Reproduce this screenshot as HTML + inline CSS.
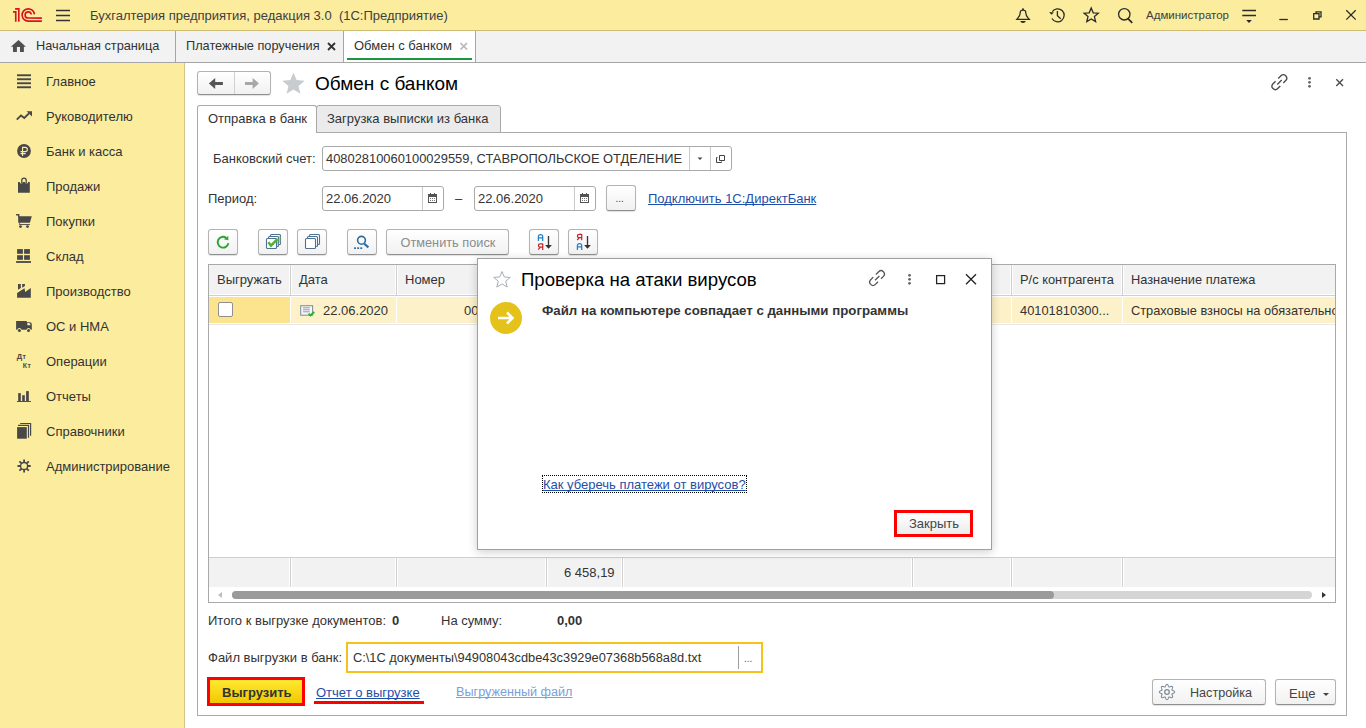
<!DOCTYPE html>
<html><head><meta charset="utf-8">
<style>
*{margin:0;padding:0;box-sizing:border-box}
html,body{width:1366px;height:728px;overflow:hidden;background:#fff;font-family:"Liberation Sans",sans-serif;font-size:13px;color:#333}
.a{position:absolute}
.t{position:absolute;white-space:pre;line-height:15px;font-size:13px}
svg{position:absolute;overflow:visible}
#topbar{left:0;top:0;width:1366px;height:31px;background:#fbec9e;border-bottom:1px solid #cdbd76}
#tabbar{left:0;top:31px;width:1366px;height:32px;background:#f2f2f2;border-bottom:1px solid #a5a5a5}
#side{left:0;top:63px;width:185px;height:665px;background:#fbec9e;border-right:1px solid #d3c68a}
.btn{position:absolute;border:1px solid #b3b3b3;border-bottom-color:#8f8f8f;border-radius:3px;background:linear-gradient(#fff,#f1f1f1);box-shadow:0 1px 1px rgba(0,0,0,.12)}
.inp{position:absolute;border:1px solid #a9a9a9;border-radius:3px;background:#fff}
.lnk{color:#1f4ea8;text-decoration:underline;text-decoration-skip-ink:none}
</style></head><body>

<!-- TOP BAR -->
<div id="topbar" class="a"></div>
<svg style="left:0;top:0" width="80" height="30" viewBox="0 0 80 30">
  <g fill="none" stroke="#d8131e" stroke-width="1.65">
    <path d="M13 11.9 H15.75 V21.8"/>
    <path d="M15.1 8.85 H18.8 V21.8"/>
    <path d="M34.4 14.3 A6.17 6.17 0 1 0 28.27 21.15 H41.9"/>
    <path d="M31.28 14.5 A3.1 3.1 0 1 0 28.2 18.05 H41.9"/>
  </g>
  <g stroke="#333" stroke-width="1.3">
    <path d="M56 10.5 H70 M56 15.5 H70 M56 20.5 H70"/>
  </g>
</svg>
<div class="t" style="left:90px;top:8px;color:#404040">Бухгалтерия предприятия, редакция 3.0  (1С:Предприятие)</div>

<!-- top right icons -->
<svg style="left:1000px;top:0" width="366" height="30" viewBox="1000 0 366 30">
  <g fill="none" stroke="#2b2b2b" stroke-width="1.3">
    <!-- bell -->
    <path d="M1016.8 19.4 H1029.3 L1028 17.9 C1026.5 16.4 1025.9 15 1025.7 12.5 L1025.6 11.3 Q1025.2 10.2 1023 10.2 Q1020.8 10.2 1020.4 11.3 L1020.3 12.5 C1020.1 15 1019.5 16.4 1018 17.9 Z"/>
    <!-- history -->
    <path d="M1052.3 11.6 A6.5 6.5 0 1 1 1052 18.5"/>
    <path d="M1057.4 11 V15.8 L1060.7 18.8"/>
    <!-- star -->
    <path d="M1091.2 8 L1093.2 12.8 L1098.3 13.2 L1094.4 16.6 L1095.6 21.6 L1091.2 18.9 L1086.8 21.6 L1088 16.6 L1084.1 13.2 L1089.2 12.8 Z"/>
    <!-- search -->
    <circle cx="1124.3" cy="14.3" r="5.7"/>
    <!-- filter -->
    <path d="M1242.3 10.5 H1256 M1242.3 15.5 H1256"/>
    <!-- minimize -->
    <path d="M1279.3 19.5 H1287.8"/>
    <!-- restore -->
    <path d="M1313.7 13.6 H1319 V19 H1313.7 Z M1316 13.6 V11.8 H1321 V16.8 H1319"/>
    <!-- close -->
    <path d="M1346.3 10.2 L1355.7 19.6 M1355.7 10.2 L1346.3 19.6"/>
  </g>
  <g fill="#2b2b2b">
    <circle cx="1023" cy="9.2" r="1"/>
    <path d="M1020.2 21 H1025.8 Q1025.2 22.9 1023 22.9 Q1020.8 22.9 1020.2 21 Z"/>
    <path d="M1049.1 12.1 L1053.9 12.6 L1051.5 14.8 Z"/>
    <path d="M1128.3 17.7 L1132.9 22.2 L1131.6 23.4 L1127.1 18.9 Z"/>
    <path d="M1246.2 20 H1251.8 L1249 22.9 Z"/>
  </g>
</svg>
<div class="t" style="left:1146px;top:7.5px;font-size:11.5px;color:#404040">Администратор</div>

<!-- TAB BAR -->
<div id="tabbar" class="a"></div>
<div class="a" style="left:175px;top:31px;width:1px;height:31px;background:#a5a5a5"></div>
<div class="a" style="left:343px;top:31px;width:133px;height:31px;background:#fff;border-left:1px solid #a5a5a5;border-right:1px solid #a5a5a5"></div>
<div class="a" style="left:347px;top:58px;width:125px;height:2px;background:#1a9640"></div>
<svg style="left:0;top:31px" width="30" height="31" viewBox="0 0 30 31">
  <path fill="#505050" d="M18.5 8.9 L25.9 15.7 H23.9 V20.9 H20 V15.9 H16.9 V20.9 H13 V15.7 H10.9 Z"/>
</svg>
<div class="t" style="left:36px;top:38px;color:#333;font-size:12.75px">Начальная страница</div>
<div class="t" style="left:186px;top:38px;color:#333;font-size:12.75px">Платежные поручения</div>
<svg style="left:326px;top:41px" width="12" height="12" viewBox="0 0 12 12"><path d="M2 2 L9 9 M9 2 L2 9" stroke="#333" stroke-width="1.8"/></svg>
<div class="t" style="left:354px;top:38px;color:#333">Обмен с банком</div>
<svg style="left:459px;top:41px" width="12" height="12" viewBox="0 0 12 12"><path d="M1.5 2 L8 8.5 M8 2 L1.5 8.5" stroke="#b5b5b5" stroke-width="1.6"/></svg>

<!-- SIDEBAR -->
<div id="side" class="a"></div>
<div class="t" style="left:46px;top:73.8px;color:#333">Главное</div>
<div class="t" style="left:46px;top:108.8px;color:#333">Руководителю</div>
<div class="t" style="left:46px;top:143.8px;color:#333">Банк и касса</div>
<div class="t" style="left:46px;top:178.8px;color:#333">Продажи</div>
<div class="t" style="left:46px;top:213.8px;color:#333">Покупки</div>
<div class="t" style="left:46px;top:248.8px;color:#333">Склад</div>
<div class="t" style="left:46px;top:283.8px;color:#333">Производство</div>
<div class="t" style="left:46px;top:318.8px;color:#333">ОС и НМА</div>
<div class="t" style="left:46px;top:353.8px;color:#333">Операции</div>
<div class="t" style="left:46px;top:388.8px;color:#333">Отчеты</div>
<div class="t" style="left:46px;top:423.8px;color:#333">Справочники</div>
<div class="t" style="left:46px;top:458.8px;color:#333">Администрирование</div>
<svg style="left:0;top:63px" width="40" height="420" viewBox="0 63 40 420">
 <g fill="#484848">
  <rect x="17" y="74.3" width="14" height="1.9"/><rect x="17" y="78.3" width="14" height="1.9"/><rect x="17" y="82.3" width="14" height="1.9"/><rect x="17" y="86.3" width="14" height="1.9"/>
 </g>
 <path fill="none" stroke="#484848" stroke-width="1.9" d="M16.8 119.6 L21 115.4 L24.3 118 L29 113.3"/>
 <path fill="#484848" d="M26.6 111.2 H32 V116.6 Z"/>
 <circle cx="24" cy="151" r="6.9" fill="#484848"/>
 <path fill="none" stroke="#fbec9e" stroke-width="1.15" d="M22.55 156 V147.3 H25.2 A2.15 2.15 0 0 1 25.2 151.6 H20.5 M20.5 153.6 H25.7"/>
 <path fill="#484848" d="M18 182 H19.7 A1.6 1.6 0 0 0 22.9 182 H24.9 A1.6 1.6 0 0 0 28.1 182 H29.8 V192.7 H18 Z"/>
 <path fill="none" stroke="#484848" stroke-width="1.3" d="M21.8 183.6 V180.3 A2.2 2.2 0 0 1 26.2 180.3 V183.6"/>
 <path fill="none" stroke="#484848" stroke-width="1.4" d="M16.1 214.8 H18.7 V217"/>
 <path fill="#484848" d="M18.2 216.3 H31.8 L29.9 222.8 H18.2 Z"/>
 <rect x="19.3" y="222.5" width="0.8" height="2" fill="#484848"/>
 <rect x="19.3" y="224" width="10.6" height="0.9" fill="#484848"/>
 <circle cx="20.5" cy="226.6" r="1.4" fill="#484848"/><circle cx="27.5" cy="226.6" r="1.4" fill="#484848"/>
 <g fill="#484848">
  <rect x="17.1" y="249.1" width="5.8" height="4.7"/><rect x="24.1" y="249.1" width="5.8" height="4.7"/>
  <rect x="17.1" y="255.2" width="5.8" height="4.6"/><rect x="24.1" y="255.2" width="5.8" height="4.6"/>
  <rect x="16.1" y="261.1" width="14.9" height="1.8"/>
  <path d="M17.1 297.7 V292.9 L24.5 288.2 L25.2 292.1 L30.8 288.1 V297.7 Z"/>
  <path d="M18 284.1 H20.8 V288 L18 289.8 Z"/><path d="M22.2 284.1 H24.9 V285.9 L22.2 287.7 Z"/>
  <path d="M16.1 329.7 V320.9 H26.8 V322.2 H30.2 Q31.8 322.4 31.8 324.6 V329.7 H30.7 A2.3 2.3 0 0 0 26.3 329.7 H21.6 A2.3 2.3 0 0 0 17.2 329.7 Z"/>
  <circle cx="19.4" cy="330.5" r="1.5"/><circle cx="28.5" cy="330.5" r="1.5"/>
 </g>
 <path fill="#fbec9e" d="M27.3 323.1 H29.5 L30.8 325.3 H27.3 Z"/>
 <g fill="#484848" font-family="Liberation Sans" font-weight="bold">
  <text x="16.8" y="359.4" font-size="7.6">Д</text>
  <text x="22.4" y="358.8" font-size="6.8">т</text>
  <text x="22.7" y="367.9" font-size="7">К</text>
  <text x="27.5" y="367.7" font-size="6.8">т</text>
 </g>
 <g fill="#484848">
  <rect x="18.2" y="393.1" width="2.6" height="8.5"/><rect x="22.2" y="395.2" width="2.6" height="6.4"/><rect x="26.1" y="391.1" width="2.7" height="10.5"/>
  <rect x="16.9" y="401" width="14.1" height="0.9"/>
  <rect x="17.1" y="427.1" width="9.7" height="11.6"/>
 </g>
 <path fill="none" stroke="#484848" stroke-width="1.2" d="M18 425.4 H28.5 V437.8 M20.2 423.5 H30.6 V435.7"/>
 <circle cx="24.1" cy="466" r="3.55" fill="none" stroke="#484848" stroke-width="1.4"/>
 <path stroke="#484848" stroke-width="1.8" d="M27.70 466.00 L30.70 466.00 M26.65 468.55 L28.77 470.67 M24.10 469.60 L24.10 472.60 M21.55 468.55 L19.43 470.67 M20.50 466.00 L17.50 466.00 M21.55 463.45 L19.43 461.33 M24.10 462.40 L24.10 459.40 M26.65 463.45 L28.77 461.33"/>
</svg>

<!-- MAIN FORM -->
<!-- form header -->
<div class="btn" style="left:197px;top:71px;width:74px;height:24px"></div>
<div class="a" style="left:234px;top:72px;width:1px;height:22px;background:#cfcfcf"></div>
<svg style="left:197px;top:71px" width="74" height="24" viewBox="0 0 74 24">
  <path fill="#555" d="M11.9 12.4 L18.2 6.9 V11.1 H25.9 V13.9 H18.2 V17.9 Z"/>
  <path fill="#a8a8a8" d="M61.9 12.4 L55.6 6.9 V11.1 H48 V13.9 H55.6 V17.9 Z"/>
</svg>
<svg style="left:280px;top:70px" width="28" height="26" viewBox="280 70 28 26"><path fill="#c9cccf" d="M293.50 72.50 L296.62 80.01 L304.72 80.65 L298.54 85.94 L300.44 93.85 L293.50 89.60 L286.56 93.85 L288.46 85.94 L282.28 80.65 L290.38 80.01 Z"/></svg>
<div class="t" style="left:315px;top:72.5px;font-size:19px;line-height:22px;color:#000">Обмен с банком</div>
<svg style="left:1265px;top:70px" width="90" height="24" viewBox="1265 70 90 24">
  <g fill="none" stroke="#4a4a4a" stroke-width="1.35">
    <path d="M1278.2 78.6 L1281 75.8 A3.3 3.3 0 0 1 1285.7 80.5 L1283.3 82.9 M1275.6 81.2 L1273 83.8 A3.3 3.3 0 0 0 1277.7 88.5 L1280.3 85.9 M1277.3 84.4 L1281.7 80.1"/>
    <path d="M1336.3 79.2 L1343 85.9 M1343 79.2 L1336.3 85.9"/>
  </g>
  <g fill="#666"><circle cx="1309.5" cy="78.3" r="1.4"/><circle cx="1309.5" cy="82.3" r="1.4"/><circle cx="1309.5" cy="86.3" r="1.4"/></g>
</svg>

<!-- tab page frame -->
<div class="a" style="left:197px;top:132px;width:1150px;height:584px;border:1px solid #a9a9a9;border-top:none"></div>
<div class="a" style="left:316px;top:132px;width:1031px;height:1px;background:#a9a9a9"></div>
<div class="a" style="left:197px;top:105px;width:120px;height:28px;border:1px solid #a9a9a9;border-bottom:none;border-radius:3px 3px 0 0;background:#fff"></div>
<div class="a" style="left:316px;top:105px;width:185px;height:28px;border:1px solid #a9a9a9;border-radius:3px 3px 0 0;background:#ebebeb"></div>
<div class="t" style="left:208px;top:110.5px">Отправка в банк</div>
<div class="t" style="left:327px;top:110.5px">Загрузка выписки из банка</div>

<!-- bank account -->
<div class="t" style="left:213px;top:150.5px">Банковский счет:</div>
<div class="inp" style="left:322px;top:146px;width:410px;height:25px"></div>
<div class="a" style="left:689px;top:147px;width:1px;height:23px;background:#c9c9c9"></div>
<div class="a" style="left:710px;top:147px;width:1px;height:23px;background:#c9c9c9"></div>
<div class="t" style="left:326px;top:150.5px;color:#333;font-size:12.9px">40802810060100029559, СТАВРОПОЛЬСКОЕ ОТДЕЛЕНИЕ</div>
<svg style="left:690px;top:147px" width="42" height="23" viewBox="0 0 42 23">
  <path fill="#444" d="M7.5 10.5 H12.5 L10 13 Z"/>
  <g fill="none" stroke="#444" stroke-width="1"><path d="M27.5 10.5 H26.5 V15.5 H31.5 V14.5 M29.5 8.5 H34.5 V13.5 H29.5 Z"/></g>
</svg>

<!-- period -->
<div class="t" style="left:208px;top:190.5px">Период:</div>
<div class="inp" style="left:322px;top:186px;width:122px;height:25px"></div>
<div class="a" style="left:422px;top:187px;width:1px;height:23px;background:#c9c9c9"></div>
<div class="t" style="left:326px;top:190.5px">22.06.2020</div>
<div class="t" style="left:455px;top:190.5px">–</div>
<div class="inp" style="left:474px;top:186px;width:122px;height:25px"></div>
<div class="a" style="left:574px;top:187px;width:1px;height:23px;background:#c9c9c9"></div>
<div class="t" style="left:478px;top:190.5px">22.06.2020</div>
<svg style="left:0;top:0" width="600" height="220" viewBox="0 0 600 220">
  <g fill="#555">
    <path d="M428 194 H437 V203 H428 Z M429 197 V202 H436 V197 Z"/>
    <rect x="430" y="193" width="1" height="2"/><rect x="434" y="193" width="1" height="2"/>
    <path d="M580 194 H589 V203 H580 Z M581 197 V202 H588 V197 Z"/>
    <rect x="582" y="193" width="1" height="2"/><rect x="586" y="193" width="1" height="2"/>
  </g>
  <g fill="#777"><rect x="430" y="198" width="1" height="1"/><rect x="432" y="198" width="1" height="1"/><rect x="434" y="198" width="1" height="1"/><rect x="430" y="200" width="1" height="1"/><rect x="432" y="200" width="1" height="1"/><rect x="434" y="200" width="1" height="1"/>
  <rect x="582" y="198" width="1" height="1"/><rect x="584" y="198" width="1" height="1"/><rect x="586" y="198" width="1" height="1"/><rect x="582" y="200" width="1" height="1"/><rect x="584" y="200" width="1" height="1"/><rect x="586" y="200" width="1" height="1"/></g>
</svg>
<div class="btn" style="left:606px;top:185px;width:30px;height:26px"></div>
<div class="t" style="left:615.5px;top:191px;font-size:10px;color:#444">...</div>
<div class="t lnk" style="left:648px;top:190.5px">Подключить 1С:ДиректБанк</div>

<!-- toolbar -->
<div class="btn" style="left:208px;top:229px;width:30px;height:26px"></div>
<div class="btn" style="left:258px;top:229px;width:30px;height:26px"></div>
<div class="btn" style="left:297px;top:229px;width:30px;height:26px"></div>
<div class="btn" style="left:347px;top:229px;width:30px;height:26px"></div>
<div class="btn" style="left:386px;top:229px;width:123px;height:26px"></div>
<div class="t" style="left:400.5px;top:234.5px;color:#8c8c8c;font-size:12.75px">Отменить поиск</div>
<div class="btn" style="left:529px;top:229px;width:30px;height:26px"></div>
<div class="btn" style="left:568px;top:229px;width:30px;height:26px"></div>
<svg style="left:0;top:0" width="620" height="260" viewBox="0 0 620 260">
  <!-- refresh -->
  <path fill="none" stroke="#2ba534" stroke-width="1.9" d="M228.4 243.2 A5.4 5.4 0 1 1 226.2 237.8"/>
  <path fill="#2ba534" d="M223.8 239.3 L228.3 235.9 L228.3 240.2 Z"/>
  <!-- check stack -->
  <g fill="#fff" stroke="#4d7191" stroke-width="1.1">
    <rect x="270.5" y="234.5" width="10" height="10" rx="1"/>
    <rect x="268.5" y="236.5" width="10" height="10" rx="1"/>
    <rect x="266.5" y="238.5" width="10" height="10" rx="1"/>
  </g>
  <path fill="none" stroke="#8fcf6a" stroke-width="1" d="M279.8 236 V243 M277.8 238 V245"/>
  <path fill="none" stroke="#4db22e" stroke-width="2.4" d="M268.3 242.3 L271 245.6 L277.4 239.1"/>
  <!-- copy stack -->
  <g fill="#fff" stroke="#4d7191" stroke-width="1.1">
    <rect x="309.5" y="234.5" width="10" height="10" rx="1"/>
    <rect x="307.5" y="236.5" width="10" height="10" rx="1"/>
    <rect x="305.5" y="238.5" width="10" height="10" rx="1"/>
  </g>
  <!-- search adv -->
  <g fill="none" stroke="#2b6c9e" stroke-width="1.6"><circle cx="361.5" cy="240.3" r="3.9"/></g>
  <path d="M364.3 243.8 L368.4 247.4" stroke="#2b6c9e" stroke-width="2.1"/>
  <g fill="#2b6c9e"><rect x="354.1" y="247.3" width="1.9" height="1.7"/><rect x="357.2" y="247.3" width="1.9" height="1.7"/><rect x="360.3" y="247.3" width="1.9" height="1.7"/></g>
  <!-- sort -->
  <g fill="none" stroke-width="1.25">
    <path stroke="#2280c8" d="M538.4 240.9 V236.6 Q538.4 234.7 540.55 234.7 Q542.7 234.7 542.7 236.6 V240.9 M538.4 237.9 H542.7"/>
    <path stroke="#c4262c" d="M542.7 243.5 V249.9 M542.7 243.9 H540.1 Q538.4 243.9 538.4 245.5 Q538.4 247.1 540.1 247.1 H542.7 M540.4 247.1 L538.2 249.7"/>
    <path stroke="#c4262c" d="M581.7 233.9 V240.3 M581.7 234.3 H579.1 Q577.4 234.3 577.4 235.9 Q577.4 237.5 579.1 237.5 H581.7 M579.4 237.5 L577.2 240.1"/>
    <path stroke="#2280c8" d="M577.4 249.9 V245.6 Q577.4 243.7 579.55 243.7 Q581.7 243.7 581.7 245.6 V249.9 M577.4 246.9 H581.7"/>
  </g>
  <g stroke="#333" stroke-width="1.3" fill="none"><path d="M548.5 236 V246 M587.5 236 V246"/></g>
  <g fill="#333"><path d="M545.1 244.9 H551.9 L548.5 248.8 Z M584.1 244.9 H590.9 L587.5 248.8 Z"/></g>
</svg>

<!-- table -->
<div class="a" style="left:208px;top:264px;width:1128px;height:339px;border:1px solid #a9a9a9;background:#fff"></div>
<div class="a" style="left:209px;top:265px;width:1126px;height:32px;background:#fff"></div>
<div class="a" style="left:209px;top:265px;width:1126px;height:29px;background:#f2f2f2"></div>
<div class="a" style="left:209px;top:295px;width:1126px;height:1px;background:#cfcfcf"></div>
<div class="a" style="left:209px;top:324px;width:1126px;height:1px;background:#e8e8e8"></div>
<div class="a" style="left:209px;top:297px;width:81px;height:26px;background:#fce38e"></div>
<div class="a" style="left:291px;top:297px;width:1044px;height:26px;background:#fdf1c9"></div>
<div class="a" style="left:289px;top:265px;width:3px;height:30px;background:#fff"></div>
<div class="a" style="left:290px;top:265px;width:1px;height:30px;background:#cfcfcf"></div>
<div class="a" style="left:290px;top:297px;width:1px;height:26px;background:#fff"></div>
<div class="a" style="left:395px;top:265px;width:3px;height:30px;background:#fff"></div>
<div class="a" style="left:396px;top:265px;width:1px;height:30px;background:#cfcfcf"></div>
<div class="a" style="left:396px;top:297px;width:1px;height:26px;background:#fff"></div>
<div class="a" style="left:545px;top:265px;width:3px;height:30px;background:#fff"></div>
<div class="a" style="left:546px;top:265px;width:1px;height:30px;background:#cfcfcf"></div>
<div class="a" style="left:546px;top:297px;width:1px;height:26px;background:#fff"></div>
<div class="a" style="left:621px;top:265px;width:3px;height:30px;background:#fff"></div>
<div class="a" style="left:622px;top:265px;width:1px;height:30px;background:#cfcfcf"></div>
<div class="a" style="left:622px;top:297px;width:1px;height:26px;background:#fff"></div>
<div class="a" style="left:911px;top:265px;width:3px;height:30px;background:#fff"></div>
<div class="a" style="left:912px;top:265px;width:1px;height:30px;background:#cfcfcf"></div>
<div class="a" style="left:912px;top:297px;width:1px;height:26px;background:#fff"></div>
<div class="a" style="left:1010px;top:265px;width:3px;height:30px;background:#fff"></div>
<div class="a" style="left:1011px;top:265px;width:1px;height:30px;background:#cfcfcf"></div>
<div class="a" style="left:1011px;top:297px;width:1px;height:26px;background:#fff"></div>
<div class="a" style="left:1121px;top:265px;width:3px;height:30px;background:#fff"></div>
<div class="a" style="left:1122px;top:265px;width:1px;height:30px;background:#cfcfcf"></div>
<div class="a" style="left:1122px;top:297px;width:1px;height:26px;background:#fff"></div>
<div class="t" style="left:217px;top:272px">Выгружать</div>
<div class="t" style="left:299px;top:272px">Дата</div>
<div class="t" style="left:405px;top:272px">Номер</div>
<div class="t" style="left:1020px;top:272px;font-size:12.85px">Р/с контрагента</div>
<div class="t" style="left:1131px;top:272px;font-size:12.8px">Назначение платежа</div>
<div class="a" style="left:218px;top:302px;width:15px;height:15px;border:1px solid #8f8f8f;border-radius:2px;background:#fff"></div>
<svg style="left:298px;top:303px" width="20" height="16" viewBox="0 0 20 16">
  <rect x="2.7" y="2.7" width="11.9" height="9.5" fill="#f7f7f7" stroke="#8591a0" stroke-width="1.1"/>
  <path d="M5 4.8 H11.8 M5 6.8 H11.8 M5 8.8 H11.8" stroke="#8591a0" stroke-width="0.9"/>
  <path d="M10.6 10.6 L12.4 12.4 L16.2 8.9" fill="none" stroke="#2cb135" stroke-width="2"/>
</svg>
<div class="t" style="left:323px;top:303px">22.06.2020</div>
<div class="t" style="left:464px;top:303px">00</div>
<div class="t" style="left:1020px;top:303px;font-size:12.85px">40101810300...</div>
<div class="t" style="left:1131px;top:303px;width:204px;overflow:hidden;font-size:12.8px">Страховые взносы на обязательное</div>
<!-- footer -->
<div class="a" style="left:209px;top:557px;width:1126px;height:30px;background:#f2f2f2;border-top:1px solid #cfcfcf"></div>
<div class="a" style="left:289px;top:558px;width:3px;height:29px;background:#fff"></div>
<div class="a" style="left:290px;top:558px;width:1px;height:29px;background:#cfcfcf"></div>
<div class="a" style="left:395px;top:558px;width:3px;height:29px;background:#fff"></div>
<div class="a" style="left:396px;top:558px;width:1px;height:29px;background:#cfcfcf"></div>
<div class="a" style="left:545px;top:558px;width:3px;height:29px;background:#fff"></div>
<div class="a" style="left:546px;top:558px;width:1px;height:29px;background:#cfcfcf"></div>
<div class="a" style="left:621px;top:558px;width:3px;height:29px;background:#fff"></div>
<div class="a" style="left:622px;top:558px;width:1px;height:29px;background:#cfcfcf"></div>
<div class="a" style="left:911px;top:558px;width:3px;height:29px;background:#fff"></div>
<div class="a" style="left:912px;top:558px;width:1px;height:29px;background:#cfcfcf"></div>
<div class="a" style="left:1010px;top:558px;width:3px;height:29px;background:#fff"></div>
<div class="a" style="left:1011px;top:558px;width:1px;height:29px;background:#cfcfcf"></div>
<div class="a" style="left:1121px;top:558px;width:3px;height:29px;background:#fff"></div>
<div class="a" style="left:1122px;top:558px;width:1px;height:29px;background:#cfcfcf"></div>
<div class="t" style="left:564px;top:565px">6 458,19</div>
<!-- scrollbar -->
<div class="a" style="left:232px;top:591px;width:1080px;height:8px;border-radius:4px;background:#d5d5d5"></div>
<div class="a" style="left:232px;top:591px;width:822px;height:8px;border-radius:4px;background:#9a9a9a"></div>
<svg style="left:210px;top:587px" width="1125" height="15" viewBox="210 587 1125 15">
  <path fill="#bdbdbd" d="M218 595 L222 592 V598 Z"/>
  <path fill="#333" d="M1326 595 L1322 592 V598 Z"/>
</svg>

<!-- totals -->
<div class="t" style="left:208px;top:612.5px">Итого к выгрузке документов:</div>
<div class="t" style="left:392px;top:612.5px;font-weight:bold">0</div>
<div class="t" style="left:441px;top:612.5px">На сумму:</div>
<div class="t" style="left:557px;top:612.5px;font-weight:bold">0,00</div>

<div class="t" style="left:208px;top:650px">Файл выгрузки в банк:</div>
<div class="a" style="left:346px;top:642px;width:417px;height:31px;border:2px solid #f5c21b;background:#fff"></div>
<div class="a" style="left:738px;top:646px;width:1px;height:23px;background:#9d9d9d"></div>
<div class="t" style="left:353px;top:650px;font-size:12.82px">C:\1C документы\94908043cdbe43c3929e07368b568a8d.txt</div>
<div class="t" style="left:744px;top:651px;font-size:10px;color:#555">...</div>

<!-- bottom buttons -->
<div class="a" style="left:207px;top:677px;width:98px;height:29px;border:3px solid #ff0000;background:linear-gradient(#ffe930,#f1c800)"></div>
<div class="t" style="left:222px;top:684.5px;font-weight:bold;color:#333">Выгрузить</div>
<div class="t lnk" style="left:316px;top:684.5px">Отчет о выгрузке</div>
<div class="a" style="left:313.5px;top:700.5px;width:110px;height:3px;background:#ff0000"></div>
<div class="t" style="left:456px;top:684.5px;color:#7a9fd9;text-decoration:underline;text-decoration-skip-ink:none;font-size:12.65px">Выгруженный файл</div>
<div class="btn" style="left:1152px;top:679px;width:114px;height:26px"></div>
<div class="t" style="left:1190px;top:685.5px;color:#444;font-size:12.6px">Настройка</div>
<svg style="left:1155px;top:680px" width="24" height="24" viewBox="1155 680 24 24">
  <path fill="none" stroke="#7d8b98" stroke-width="1.05" d="M1174.65 692.00 L1174.59 692.30 L1174.41 692.58 L1174.13 692.84 L1173.77 693.07 L1173.38 693.27 L1172.97 693.43 L1172.61 693.58 L1172.30 693.72 L1172.07 693.87 L1171.94 694.05 L1171.91 694.26 L1171.96 694.53 L1172.08 694.85 L1172.24 695.21 L1172.40 695.61 L1172.55 696.03 L1172.64 696.44 L1172.65 696.83 L1172.58 697.15 L1172.41 697.41 L1172.15 697.58 L1171.83 697.65 L1171.44 697.64 L1171.03 697.55 L1170.61 697.40 L1170.21 697.24 L1169.85 697.08 L1169.53 696.96 L1169.26 696.91 L1169.05 696.94 L1168.87 697.07 L1168.72 697.30 L1168.58 697.61 L1168.43 697.97 L1168.27 698.38 L1168.07 698.77 L1167.84 699.13 L1167.58 699.41 L1167.30 699.59 L1167.00 699.65 L1166.70 699.59 L1166.42 699.41 L1166.16 699.13 L1165.93 698.77 L1165.73 698.38 L1165.57 697.97 L1165.42 697.61 L1165.28 697.30 L1165.13 697.07 L1164.95 696.94 L1164.74 696.91 L1164.47 696.96 L1164.15 697.08 L1163.79 697.24 L1163.39 697.40 L1162.97 697.55 L1162.56 697.64 L1162.17 697.65 L1161.85 697.58 L1161.59 697.41 L1161.42 697.15 L1161.35 696.83 L1161.36 696.44 L1161.45 696.03 L1161.60 695.61 L1161.76 695.21 L1161.92 694.85 L1162.04 694.53 L1162.09 694.26 L1162.06 694.05 L1161.93 693.87 L1161.70 693.72 L1161.39 693.58 L1161.03 693.43 L1160.62 693.27 L1160.23 693.07 L1159.87 692.84 L1159.59 692.58 L1159.41 692.30 L1159.35 692.00 L1159.41 691.70 L1159.59 691.42 L1159.87 691.16 L1160.23 690.93 L1160.62 690.73 L1161.03 690.57 L1161.39 690.42 L1161.70 690.28 L1161.93 690.13 L1162.06 689.95 L1162.09 689.74 L1162.04 689.47 L1161.92 689.15 L1161.76 688.79 L1161.60 688.39 L1161.45 687.97 L1161.36 687.56 L1161.35 687.17 L1161.42 686.85 L1161.59 686.59 L1161.85 686.42 L1162.17 686.35 L1162.56 686.36 L1162.97 686.45 L1163.39 686.60 L1163.79 686.76 L1164.15 686.92 L1164.47 687.04 L1164.74 687.09 L1164.95 687.06 L1165.13 686.93 L1165.28 686.70 L1165.42 686.39 L1165.57 686.03 L1165.73 685.62 L1165.93 685.23 L1166.16 684.87 L1166.42 684.59 L1166.70 684.41 L1167.00 684.35 L1167.30 684.41 L1167.58 684.59 L1167.84 684.87 L1168.07 685.23 L1168.27 685.62 L1168.43 686.03 L1168.58 686.39 L1168.72 686.70 L1168.87 686.93 L1169.05 687.06 L1169.26 687.09 L1169.53 687.04 L1169.85 686.92 L1170.21 686.76 L1170.61 686.60 L1171.03 686.45 L1171.44 686.36 L1171.83 686.35 L1172.15 686.42 L1172.41 686.59 L1172.58 686.85 L1172.65 687.17 L1172.64 687.56 L1172.55 687.97 L1172.40 688.39 L1172.24 688.79 L1172.08 689.15 L1171.96 689.47 L1171.91 689.74 L1171.94 689.95 L1172.07 690.13 L1172.30 690.28 L1172.61 690.42 L1172.97 690.57 L1173.38 690.73 L1173.77 690.93 L1174.13 691.16 L1174.41 691.42 L1174.59 691.70 L1174.65 692.00 Z"/>
  <circle cx="1167" cy="692" r="2.3" fill="none" stroke="#7d8b98" stroke-width="1.3"/>
</svg>
<div class="btn" style="left:1275px;top:679px;width:61px;height:26px"></div>
<div class="t" style="left:1289px;top:685.5px;color:#444">Еще</div>
<svg style="left:1320px;top:690px" width="10" height="8" viewBox="0 0 10 8"><path fill="#444" d="M3 3 H9 L6 6 Z"/></svg>

<!-- DIALOG -->
<div class="a" style="left:477px;top:258px;width:515px;height:292px;border:1px solid #a0a0a0;background:#fff;box-shadow:0 2px 9px rgba(0,0,0,.2)"></div>
<svg style="left:490px;top:268px" width="24" height="22" viewBox="0 0 24 22">
  <path fill="none" stroke="#a8aeb5" stroke-width="1" d="M12 3.5 L14.3 9 L20.3 9.4 L15.7 13.2 L17.2 19.1 L12 15.9 L6.8 19.1 L8.3 13.2 L3.7 9.4 L9.7 9 Z"/>
</svg>
<div class="t" style="left:521px;top:269px;font-size:18.6px;line-height:22px;color:#000">Проверка на атаки вирусов</div>
<svg style="left:860px;top:265px" width="130" height="25" viewBox="860 265 130 25">
  <g fill="none" stroke="#555" stroke-width="1.3">
    <path transform="translate(-402.3 195.9)" d="M1278.2 78.6 L1281 75.8 A3.3 3.3 0 0 1 1285.7 80.5 L1283.3 82.9 M1275.6 81.2 L1273 83.8 A3.3 3.3 0 0 0 1277.7 88.5 L1280.3 85.9 M1277.3 84.4 L1281.7 80.1"/>
  </g>
  <g fill="#666"><circle cx="909.5" cy="275.3" r="1.4"/><circle cx="909.5" cy="279.3" r="1.4"/><circle cx="909.5" cy="283.3" r="1.4"/></g>
  <rect x="936.6" y="275.6" width="8" height="8" fill="none" stroke="#222" stroke-width="1.25"/>
  <path d="M966 274.2 L976 284.2 M976 274.2 L966 284.2" stroke="#222" stroke-width="1.3"/>
</svg>
<svg style="left:488px;top:300px" width="36" height="36" viewBox="0 0 36 36">
  <circle cx="18" cy="18" r="16" fill="#e4c21a"/>
  <path d="M10 18 H24 M19 12.5 L24.5 18 L19 23.5" fill="none" stroke="#fff" stroke-width="2.6"/>
</svg>
<div class="t" style="left:542px;top:303px;font-weight:bold;font-size:13.25px;color:#333">Файл на компьютере совпадает с данными программы</div>
<div class="a" style="left:542px;top:475px;width:205px;height:18px;border:1px dotted #000"></div>
<div class="t lnk" style="left:543px;top:476.5px">Как уберечь платежи от вирусов?</div>
<div class="a" style="left:894px;top:510px;width:79px;height:27px;border:3px solid #ff0000;background:linear-gradient(#fff,#ececec)"></div>
<div class="t" style="left:909px;top:516px;color:#444">Закрыть</div>

</body></html>
